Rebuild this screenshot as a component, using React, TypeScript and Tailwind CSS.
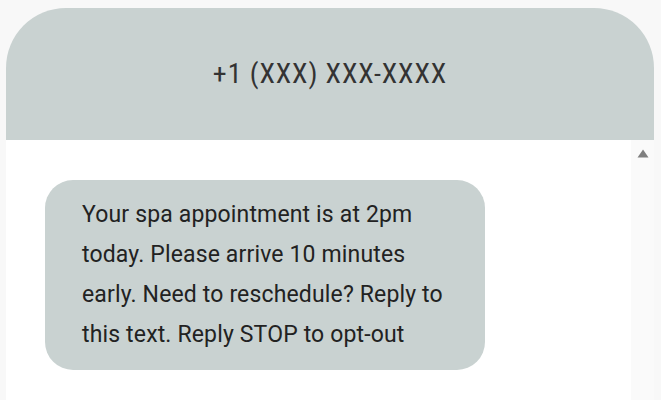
export default function App() {
    return (
        <div className="h-[400px] overflow-hidden bg-[#f8f8f8] pt-2 pl-[6px] font-['Roboto',sans-serif]">
            <div className="w-[648px] h-[420px] flex flex-col rounded-t-[60px] overflow-hidden">
                {/* header */}
                <div className="h-[132px] shrink-0 bg-[#c9d2d1] flex items-center justify-center pb-[1px]">
                    <span className="text-[28px] font-stretch-[85%] tracking-[0.9px] text-[#333]">+1 (XXX) XXX-XXXX</span>
                </div>

                {/* messages */}
                <div className="flex flex-1">
                    <div className="flex-1 bg-white pt-10 pl-[39px]">
                        <div className="w-[440px] rounded-[28px] bg-[#c9d2d1] pl-[37px] pr-[34px] pt-[15px] pb-[15px]">
                            <p className="text-[23px] leading-[40px] tracking-[0.15px] text-[#222]">
                                Your spa appointment is at 2pm today. Please arrive 10 minutes early. Need to
                                reschedule? Reply to this text. Reply STOP to opt-out
                            </p>
                        </div>
                    </div>

                    {/* scrollbar */}
                    <div className="w-[23px] bg-[#fafafa] flex justify-center pt-[9px]">
                        <svg width="12" height="9" viewBox="0 0 12 9">
                            <path d="M6 0.5 L11.5 8.5 L0.5 8.5 Z" fill="#7f7f7f" />
                        </svg>
                    </div>
                </div>
            </div>
        </div>
    );
}
